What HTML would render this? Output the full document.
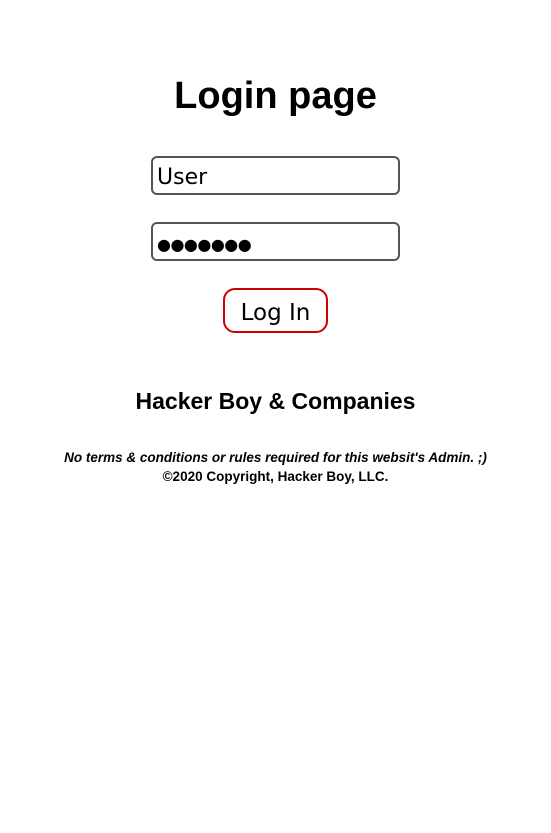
<!DOCTYPE html>
<html><head><style>
body{margin:0;width:551px;height:833px;background:#fff;font-family:"Comic Sans MS","Liberation Sans",sans-serif;color:#000;position:relative}
h1{position:absolute;top:72px;left:0;width:551px;text-align:center;margin:0;font-size:38px;font-weight:bold;line-height:48px}
.in{position:absolute;left:151px;width:241px;height:35px;border:2px solid #555;border-radius:6px;font-family:"DejaVu Sans",sans-serif;font-size:22px;line-height:40px;padding-left:4px;box-sizing:content-box}
.btn{position:absolute;left:223px;top:288px;width:101px;height:41px;border:2px solid #c00;border-radius:12px;text-align:center;font-family:"DejaVu Sans",sans-serif;font-size:23px;line-height:46px}
h2{position:absolute;top:386px;left:0;width:551px;text-align:center;margin:0;font-size:23px;line-height:30px}
.s{position:absolute;left:0;width:551px;text-align:center;font-size:13.5px;font-weight:bold;line-height:16px}
</style></head><body>
<h1>Login page</h1>
<div class="in" style="top:156px">User</div>
<div class="in" style="top:222px;font-size:16px;line-height:42px;letter-spacing:-0.5px">●●●●●●●</div>
<div class="btn">Log In</div>
<h2>Hacker Boy &amp; Companies</h2>
<div class="s" style="top:450px;font-style:italic">No terms &amp; conditions or rules required for this websit's Admin. ;)</div>
<div class="s" style="top:469px">©2020 Copyright, Hacker Boy, LLC.</div>
</body></html>
